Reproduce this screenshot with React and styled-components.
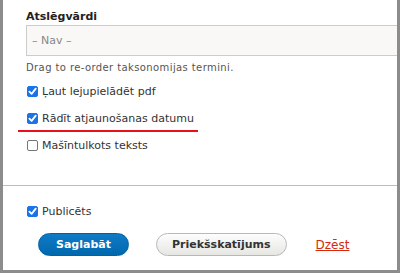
import React from "react";
import styled, { createGlobalStyle } from "styled-components";

const GlobalStyle = createGlobalStyle`
	html, body {
		margin: 0;
		padding: 0;
		background: #fff;
	}
	body {
		font-family: "DejaVu Sans", "Liberation Sans", sans-serif;
		color: #333;
	}
`;

const options = [
	{ label: "Ļaut lejupielādēt pdf", checked: true },
	{ label: "Rādīt atjaunošanas datumu", checked: true, marked: true },
	{ label: "Mašīntulkots teksts", checked: false },
];

export default function App() {
	return (
		<>
			<GlobalStyle />
			<Frame>
				<Form>
					<Label>Atslēgvārdi</Label>
					<Select>– Nav –</Select>
					<Hint>Drag to re-order taksonomijas termini.</Hint>
					<Options>
						{options.map((o) => (
							<Option key={o.label} $marked={o.marked}>
								<Box checked={o.checked} />
								{o.label}
							</Option>
						))}
					</Options>
				</Form>
				<Footer>
					<Option>
						<Box checked />
						Publicēts
					</Option>
					<Actions>
						<PrimaryButton>Saglabāt</PrimaryButton>
						<Button>Priekšskatījums</Button>
						<DeleteLink>Dzēst</DeleteLink>
					</Actions>
				</Footer>
			</Frame>
		</>
	);
}

function Box({ checked }) {
	return (
		<Check $checked={checked}>
			{checked && (
				<svg width="9" height="9" viewBox="0 0 10 10">
					<path d="M1.6 5.2 L4 7.6 L8.6 1.8" fill="none" stroke="#fff" strokeWidth="2" strokeLinecap="round" strokeLinejoin="round" />
				</svg>
			)}
		</Check>
	);
}

const Frame = styled.div`
	width: 400px;
	height: 273px;
	box-sizing: border-box;
	border-left: 3px solid #8c8c8c;
	border-right: 3px solid #8c8c8c;
	border-bottom: 3px solid #8c8c8c;
	display: flex;
	flex-direction: column;
	overflow: hidden;
`;
const Form = styled.div`
	display: flex;
	flex-direction: column;
	padding: 9px 0 0 23px;
	height: 186px;
	box-sizing: border-box;
	border-bottom: 1px solid #bdbdbd;
`;
const Label = styled.div`
	font-size: 11px;
	font-weight: bold;
	color: #222;
	line-height: 16px;
`;
const Select = styled.div`
	height: 31px;
	box-sizing: border-box;
	border: 1px solid #ccc;
	border-right: none;
	background: #f9f8f6;
	color: #888;
	font-size: 11px;
	line-height: 29px;
	padding-left: 5px;
`;
const Hint = styled.div`
	margin-top: 5px;
	font-size: 10px;
	color: #555;
	line-height: 14px;
	letter-spacing: 0.4px;
`;
const Options = styled.div`
	display: flex;
	flex-direction: column;
	gap: 12px;
	margin-top: 9px;
`;
const Option = styled.label`
	position: relative;
	display: flex;
	align-items: center;
	gap: 4px;
	font-size: 11px;
	color: #333;
	line-height: 15px;
	width: max-content;
	&::after {
		content: "";
		display: ${(p) => (p.$marked ? "block" : "none")};
		position: absolute;
		left: -8px;
		right: -4px;
		bottom: -6px;
		height: 2px;
		background: #e8101b;
	}
`;
const Check = styled.span`
	width: 11px;
	height: 11px;
	box-sizing: border-box;
	border-radius: 2px;
	display: flex;
	align-items: center;
	justify-content: center;
	margin-left: 1px;
	background: ${(p) => (p.$checked ? "#1a73e8" : "#fff")};
	border: 1px solid ${(p) => (p.$checked ? "#1a73e8" : "#767676")};
`;
const Footer = styled.div`
	display: flex;
	flex-direction: column;
	padding: 18px 0 0 23px;
`;
const Actions = styled.div`
	display: flex;
	align-items: center;
	margin-top: 14px;
	padding-left: 12px;
`;
const Button = styled.button`
	height: 23px;
	padding: 0 15px;
	border-radius: 12px;
	border: 1px solid #b8b8b8;
	background: linear-gradient(#fdfdfd, #e6e6e3);
	font-family: inherit;
	font-size: 11px;
	font-weight: bold;
	color: #333;
	margin-right: 29px;
`;
const PrimaryButton = styled(Button)`
	width: 91px;
	margin-right: 27px;
	border-color: #0062a0;
	background: linear-gradient(#0f7ac6, #0068ad);
	color: #fff;
`;
const DeleteLink = styled.a`
	font-size: 12px;
	color: #d42a0d;
	text-decoration: underline;
`;
